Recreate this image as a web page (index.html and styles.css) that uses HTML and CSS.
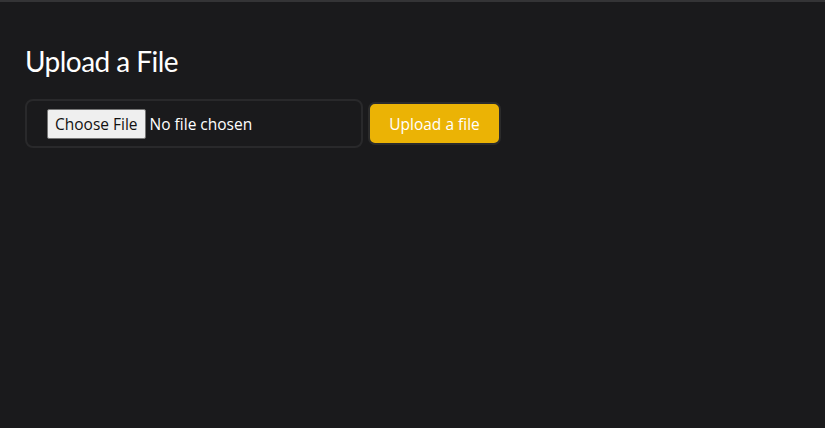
FILE: index.html
```html
<!DOCTYPE html>
<html>
<head>
<meta charset="utf-8">
<link rel="stylesheet" href="styles.css">
</head>
<body>
<div class="topline"></div>
<main class="page">
  <h1 class="title">Upload a File</h1>
  <form class="upload-row">
    <div class="file-box">
      <input type="file" class="file-input">
    </div>
    <button type="button" class="upload-btn">Upload a file</button>
  </form>
</main>
</body>
</html>
```
FILE: styles.css
```css
html, body {
  margin: 0;
  padding: 0;
  background: #1a1a1c;
  height: 100%;
}
body {
  font-family: "Open Sans", "Noto Sans", sans-serif;
  color: #fff;
}
.topline {
  height: 2px;
  background: #343436;
}
.page {
  padding: 0 25px;
}
.title {
  margin: 0;
  padding-top: 39px;
  font-family: "Lato", "Open Sans", sans-serif;
  font-weight: 400;
  font-size: 28px;
  line-height: 40px;
  letter-spacing: -0.55px;
  color: #fff;
}
.upload-row {
  display: flex;
  align-items: center;
  gap: 5px;
  margin-top: 18px;
}
.file-box {
  box-sizing: border-box;
  width: 338px;
  height: 49px;
  border: 2px solid #29292b;
  border-radius: 8px;
  padding: 0 0 0 20px;
  display: flex;
  align-items: center;
}
.file-input {
  font-family: "Open Sans", "Noto Sans", sans-serif;
  font-size: 15.5px;
  color: #fff;
}
.file-input::file-selector-button {
  font-family: "Open Sans", "Noto Sans", sans-serif;
  font-size: 15.5px;
  background: #efefef;
  color: #111;
  border: 1px solid #767676;
  border-radius: 2px;
  height: 30px;
  padding: 0 7px;
  margin-right: 4px;
}
.upload-btn {
  box-sizing: border-box;
  height: 43px;
  width: 133px;
  background: #ebb305;
  border: 2px solid #2b2b2b;
  border-radius: 7px;
  color: #fff;
  font-family: "Open Sans", "Noto Sans", sans-serif;
  font-size: 15.5px;
  padding: 0;
}
```
